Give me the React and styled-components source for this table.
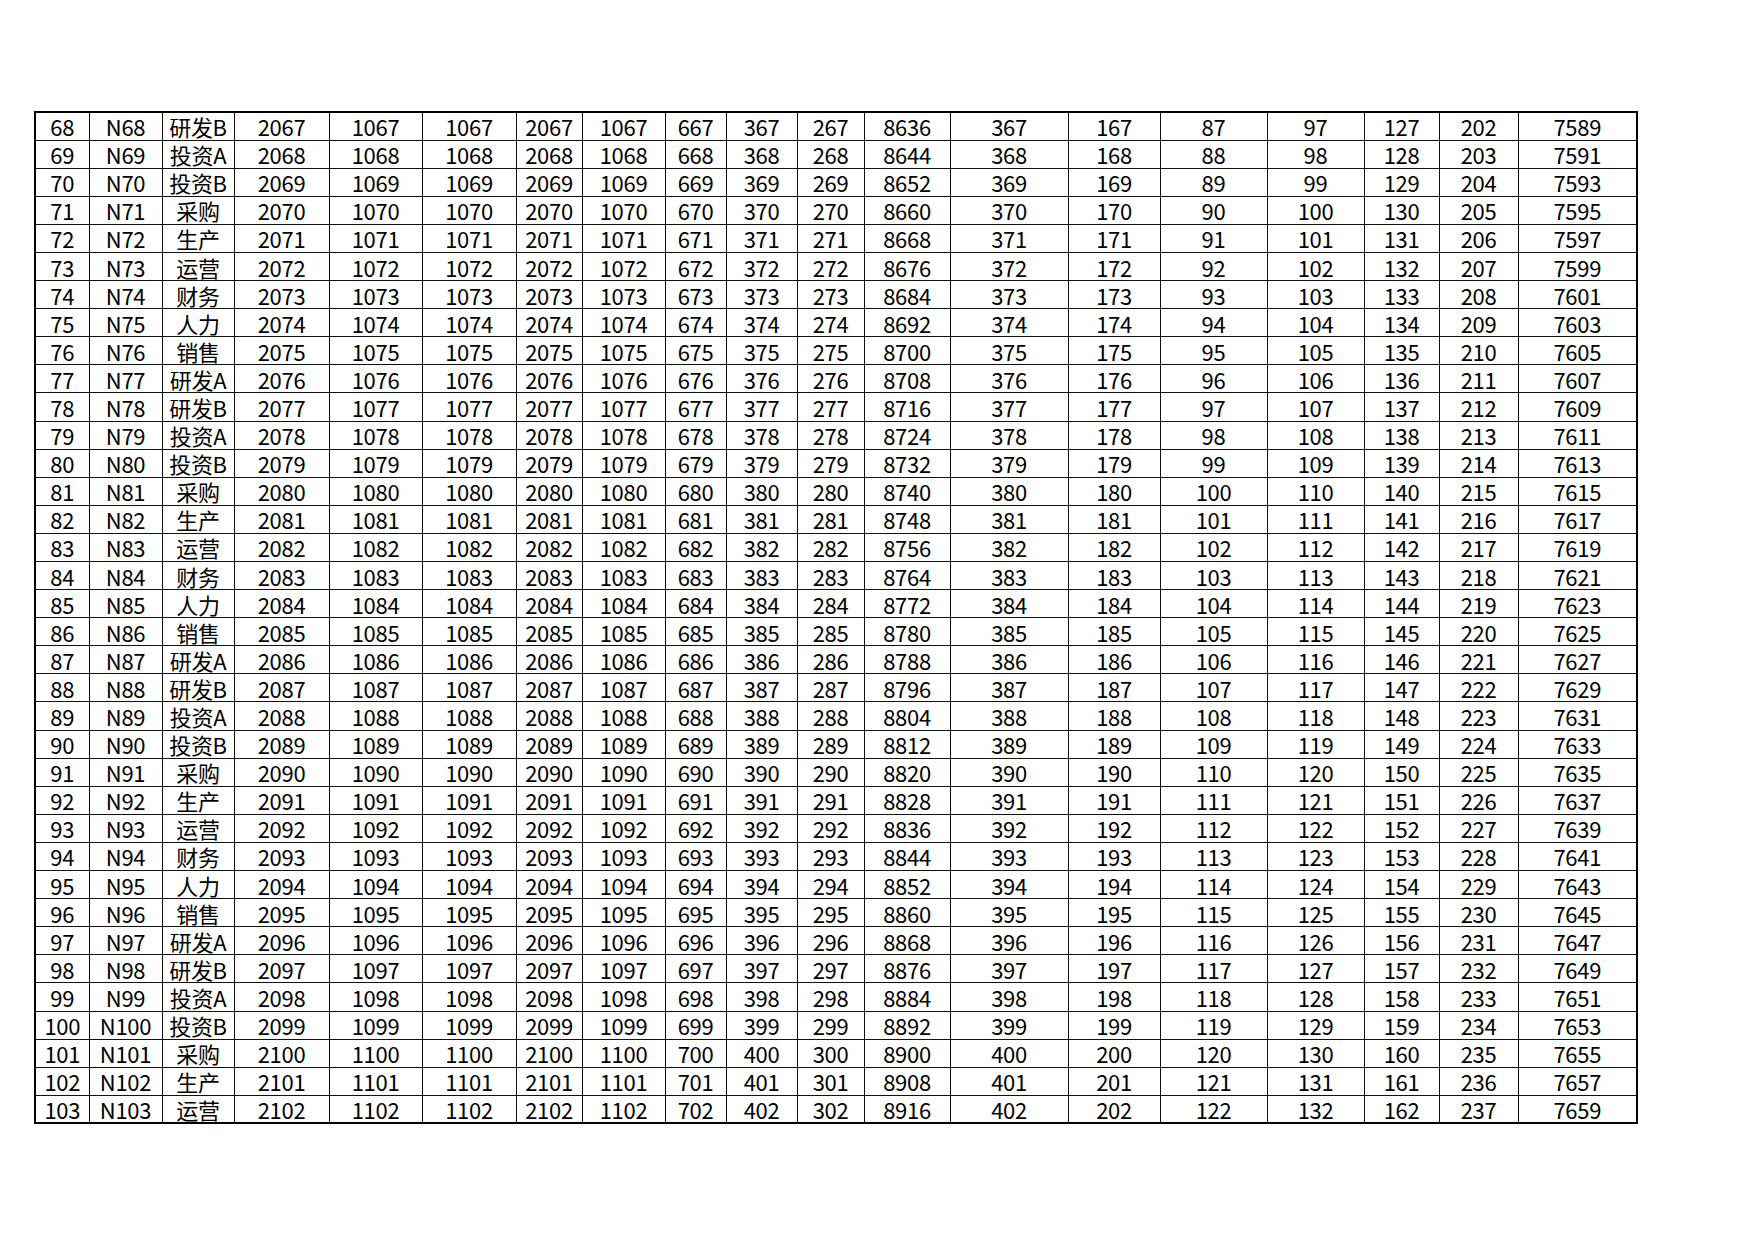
import styled, { createGlobalStyle } from 'styled-components'

const GlobalStyle = createGlobalStyle`
  html, body {
    margin: 0;
    padding: 0;
    background: #fff;
  }
  body {
    font-family: "Noto Sans CJK SC", "DejaVu Sans", sans-serif;
    color: #000;
  }
`

const Page = styled.div`
  width: 1754px;
  height: 1240px;
  padding: 111px 0 0 34px;
  box-sizing: border-box;
  background: #fff;
`

const Sheet = styled.table`
  border-collapse: collapse;
  table-layout: fixed;
  width: 1601px;
  border: 2px solid #000;
`

const Row = styled.tr`
  height: 28.1px;
`

const Cell = styled.td`
  border: 1px solid #111;
  padding: 0;
  text-align: center;
  vertical-align: middle;
  font-size: 22px;
  line-height: 24px;
  white-space: nowrap;
  letter-spacing: -0.3px;
`

const WIDTHS = [54, 73, 72, 95, 93, 94, 66, 83, 61, 71, 67, 86, 118, 92, 107, 97, 75, 79, 119]

const DEPTS = ['研发A', '研发B', '投资A', '投资B', '采购', '生产', '运营', '财务', '人力', '销售']

function buildRow(i) {
  const k = i - 68
  return [
    i,
    'N' + i,
    DEPTS[(((i - 77) % 10) + 10) % 10],
    1999 + i,
    999 + i,
    999 + i,
    1999 + i,
    999 + i,
    599 + i,
    299 + i,
    199 + i,
    8636 + 8 * k,
    299 + i,
    99 + i,
    19 + i,
    29 + i,
    59 + i,
    134 + i,
    7589 + 2 * k,
  ]
}

const rows = []
for (let i = 68; i <= 103; i++) rows.push(buildRow(i))

export default function App() {
  return (
    <>
      <GlobalStyle />
      <Page>
        <Sheet>
          <colgroup>
            {WIDTHS.map((w, idx) => (
              <col key={idx} style={{ width: w }} />
            ))}
          </colgroup>
          <tbody>
            {rows.map((r) => (
              <Row key={r[0]}>
                {r.map((v, idx) => (
                  <Cell key={idx}>{v}</Cell>
                ))}
              </Row>
            ))}
          </tbody>
        </Sheet>
      </Page>
    </>
  )
}
